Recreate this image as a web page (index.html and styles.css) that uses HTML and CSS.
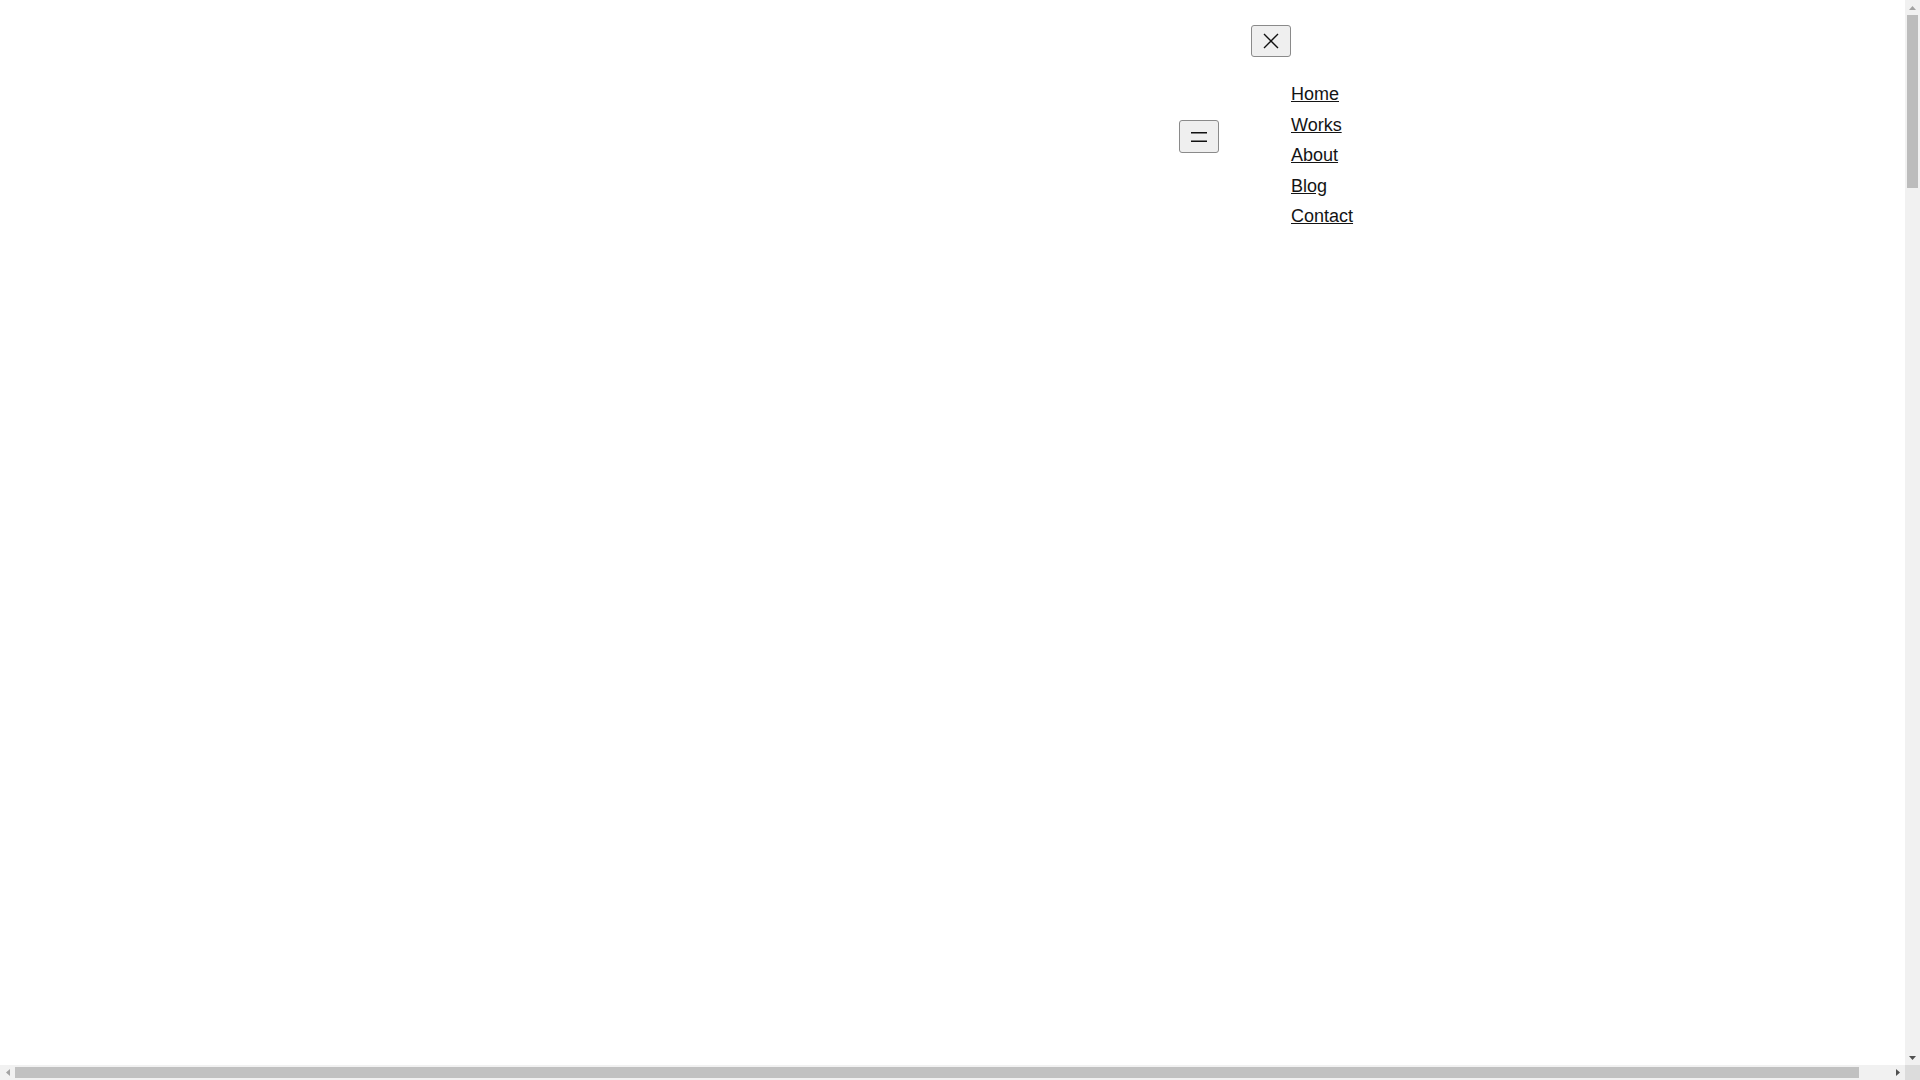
FILE: index.html
```html
<!DOCTYPE html>
<html lang="en">
<head>
<meta charset="utf-8">
<title>Menu</title>
<link rel="stylesheet" href="styles.css">
</head>
<body>
<div class="window">
  <div class="viewport">
    <header class="header">
      <button class="icon-btn menu-btn" type="button" aria-label="Open menu">
        <svg width="16" height="16" viewBox="0 0 16 16" fill="none" stroke="#111" stroke-width="1.4"><path d="M0 3.75H16M0 12.25H16"/></svg>
      </button>
      <nav class="panel">
        <button class="icon-btn close-btn" type="button" aria-label="Close menu">
          <svg width="16" height="16" viewBox="0 0 16 16" fill="none" stroke="#111" stroke-width="1.4"><path d="M1 1L15 15M15 1L1 15"/></svg>
        </button>
        <ul class="nav-list">
          <li><a href="#">Home</a></li>
          <li><a href="#">Works</a></li>
          <li><a href="#">About</a></li>
          <li><a href="#">Blog</a></li>
          <li><a href="#">Contact</a></li>
        </ul>
      </nav>
    </header>
  </div>
  <div class="vscroll">
    <div class="sb-arrow"><svg width="7" height="4" viewBox="0 0 7 4"><path d="M0 4L3.5 0L7 4Z" fill="#a3a3a3"/></svg></div>
    <div class="vtrack"><div class="vthumb"></div></div>
    <div class="sb-arrow"><svg width="7" height="4" viewBox="0 0 7 4"><path d="M0 0L7 0L3.5 4Z" fill="#505050"/></svg></div>
  </div>
  <div class="hscroll">
    <div class="sb-arrow"><svg width="4" height="7" viewBox="0 0 4 7"><path d="M4 0L4 7L0 3.5Z" fill="#a3a3a3"/></svg></div>
    <div class="htrack"><div class="hthumb"></div></div>
    <div class="sb-arrow"><svg width="4" height="7" viewBox="0 0 4 7"><path d="M0 0L0 7L4 3.5Z" fill="#505050"/></svg></div>
  </div>
  <div class="corner"></div>
</div>
</body>
</html>
```

FILE: styles.css
```css
html, body {
  margin: 0;
  padding: 0;
  background: #ffffff;
}

body {
  font-family: "Liberation Sans", Arial, sans-serif;
  color: #1a1a1a;
}

.window {
  display: grid;
  grid-template-columns: 1fr 15px;
  grid-template-rows: 1fr 15px;
  width: 100vw;
  height: 100vh;
  overflow: hidden;
}

.viewport {
  overflow: hidden;
  min-width: 0;
  min-height: 0;
}

.header {
  display: flex;
  align-items: center;
  gap: 32px;
  padding: 25px 0 0 1179px;
}

.icon-btn {
  display: flex;
  align-items: center;
  justify-content: center;
  width: 40px;
  height: 33px;
  padding: 0;
  margin: 0;
  background: #efefef;
  border: 1px solid #8a8a8a;
  border-radius: 3px;
}

.close-btn {
  height: 32px;
}

.panel {
  display: flex;
  flex-direction: column;
  align-items: flex-start;
}

.nav-list {
  list-style: none;
  margin: 22px 0 17px;
  padding: 0 0 0 40px;
  font-size: 18px;
  line-height: 30.5px;
}

.nav-list a {
  color: #141414;
  text-decoration: underline;
}

/* scrollbars */
.vscroll {
  display: flex;
  flex-direction: column;
  background: #f1f1f1;
}

.hscroll {
  display: flex;
  background: #f1f1f1;
}

.sb-arrow {
  flex: 0 0 15px;
  width: 15px;
  height: 15px;
  display: flex;
  align-items: center;
  justify-content: center;
}

.vtrack {
  flex: 1;
  padding: 0 2px;
}

.vthumb {
  height: 173px;
  background: #bcbcbc;
}

.htrack {
  flex: 1;
  padding: 2px 0;
}

.hthumb {
  width: 1844px;
  height: 11px;
  background: #c1c1c1;
}

.corner {
  background: #dcdcdc;
}
```
